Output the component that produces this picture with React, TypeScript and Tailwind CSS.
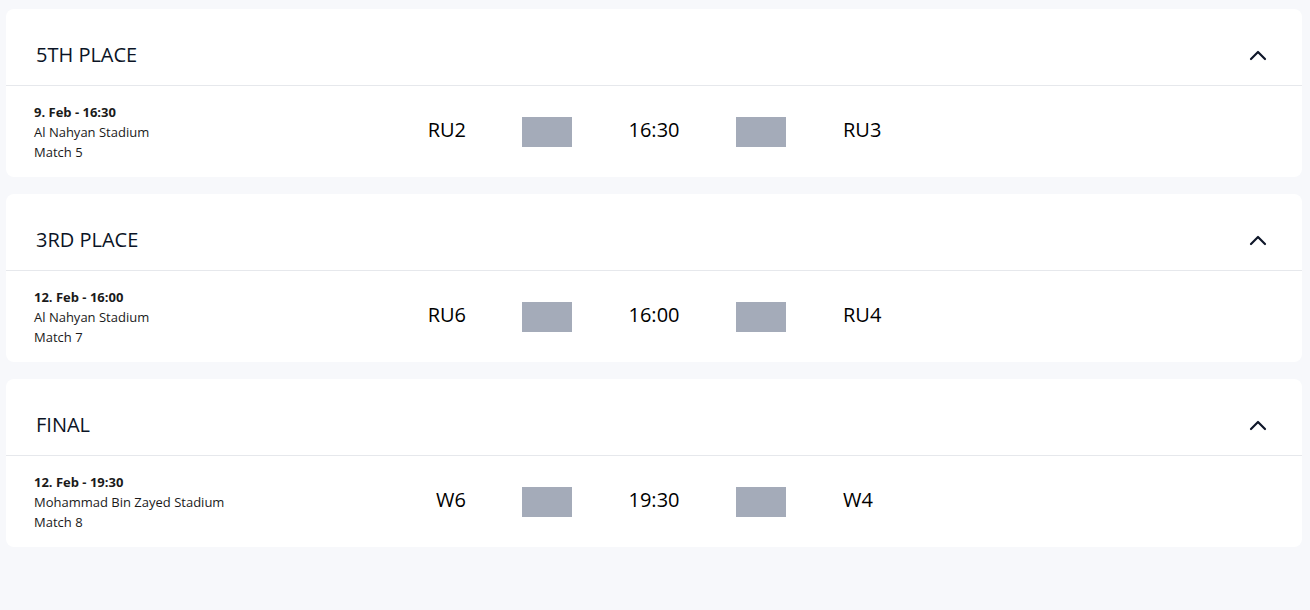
import React from "react";

type Match = {
  stage: string;
  date: string;
  venue: string;
  match: string;
  home: string;
  time: string;
  away: string;
};

const matches: Match[] = [
  { stage: "5TH PLACE", date: "9. Feb - 16:30", venue: "Al Nahyan Stadium", match: "Match 5", home: "RU2", time: "16:30", away: "RU3" },
  { stage: "3RD PLACE", date: "12. Feb - 16:00", venue: "Al Nahyan Stadium", match: "Match 7", home: "RU6", time: "16:00", away: "RU4" },
  { stage: "FINAL", date: "12. Feb - 19:30", venue: "Mohammad Bin Zayed Stadium", match: "Match 8", home: "W6", time: "19:30", away: "W4" },
];

function Chevron() {
  return (
    <svg width="18" height="12" viewBox="0 0 18 12" fill="none" className="text-[#0f172a]">
      <path d="M2 10 L9 3 L16 10" stroke="currentColor" strokeWidth="2.2" strokeLinecap="round" strokeLinejoin="round" />
    </svg>
  );
}

// one stage block: header with title + toggle, then the fixture row
function StageCard({ m }: { m: Match }) {
  return (
    <div className="bg-white rounded-lg">
      <div className="flex items-center justify-between h-[77px] pt-[15px] pl-[30px] pr-[35px] border-b border-[#e6e8ec]">
        <h2 className="text-[20px] text-[#0b1426]">{m.stage}</h2>
        <Chevron />
      </div>
      <div className="flex items-center h-[91px] pl-[28px]">
        <div className="w-[332px] text-[13px] leading-[20px] text-[#1a1a1a]">
          <div className="font-bold">{m.date}</div>
          <div>{m.venue}</div>
          <div>{m.match}</div>
        </div>
        <div className="w-[100px] mb-[4px] text-right text-[20px] text-black">{m.home}</div>
        <div className="ml-[56px] w-[50px] h-[30px] bg-[#a4abb9]" />
        <div className="w-[164px] mb-[4px] text-center text-[20px] text-black">{m.time}</div>
        <div className="w-[50px] h-[30px] bg-[#a4abb9]" />
        <div className="ml-[57px] mb-[4px] text-[20px] text-black">{m.away}</div>
      </div>
    </div>
  );
}

export default function App() {
  return (
    <div className="min-h-screen bg-[#f7f8fb] pt-[9px] pl-[6px] pr-[8px] flex flex-col gap-[17px] font-['Open_Sans',sans-serif]">
      {matches.map((m) => (
        <StageCard key={m.stage} m={m} />
      ))}
    </div>
  );
}
